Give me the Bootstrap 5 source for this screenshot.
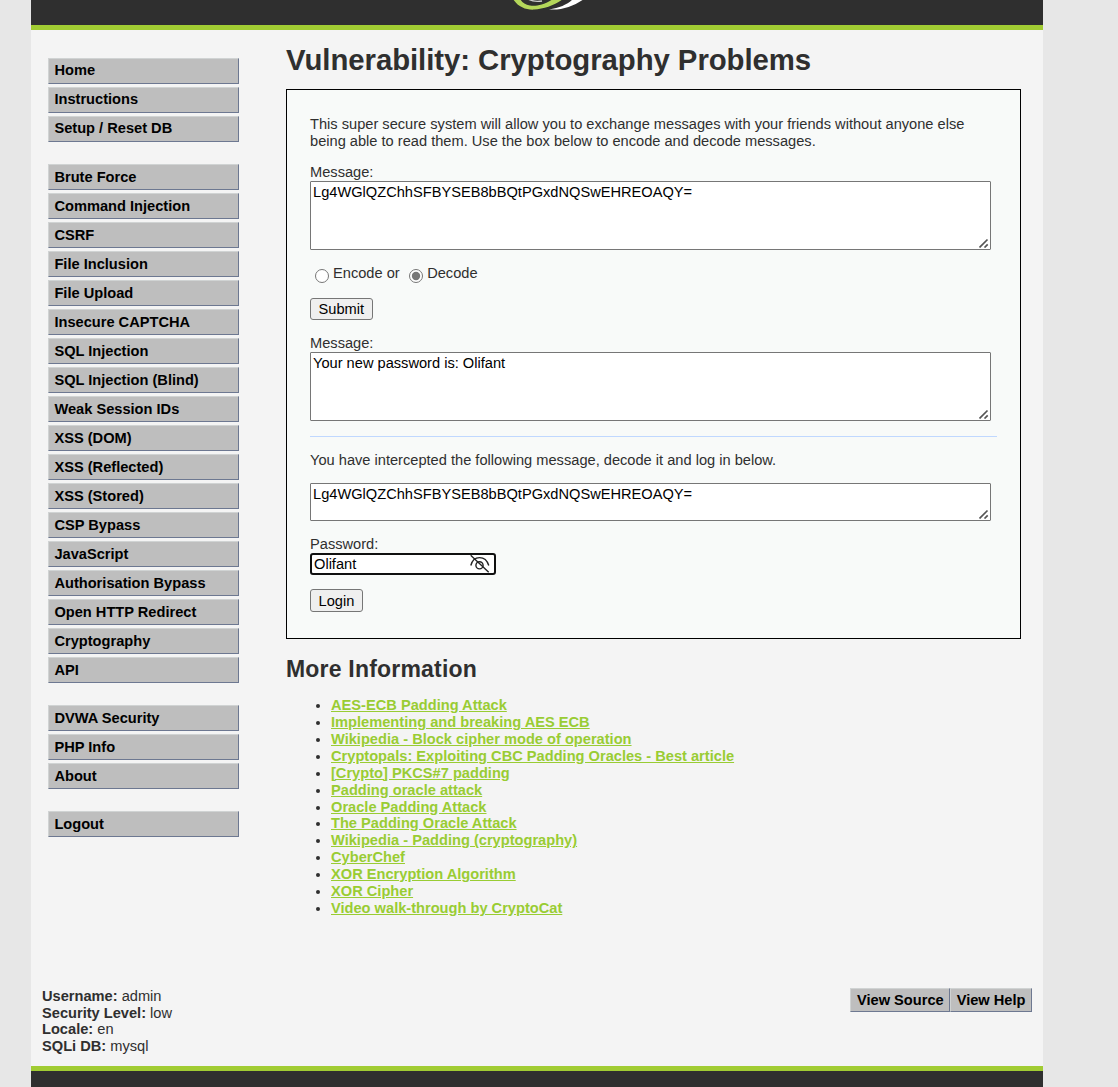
<!DOCTYPE html>
<html lang="en">
<head>
<meta charset="utf-8">
<title>Vulnerability: Cryptography Problems</title>
<link rel="stylesheet" href="https://cdn.jsdelivr.net/npm/bootstrap@5.3.0/dist/css/bootstrap.min.css">
<style>
body{background:#e7e7e7;color:#2f2f2f;font:14.64px/16.9px "Liberation Sans",Arial,sans-serif;height:1087px}
.site-wrap{width:1012px;height:1087px;margin-left:31px;background:#f4f4f4}
.site-head{height:30px;background:#2f2f2f;border-bottom:5px solid #a1cc33}
.site-head svg{overflow:visible}
.site-foot{height:21px;background:#2f2f2f;border-top:5px solid #a1cc33}
.side-menu{width:191px;margin-left:17px;padding-top:28px}
.side-menu ul{margin:0 0 22px}
.menu-link,.tool-btn{display:block;background:#bebebe;color:#000;font-weight:700;text-decoration:none;border:1px solid;border-color:#d0d3d3 #6d7891 #6d7891 #d0d3d3}
.menu-link{height:26px;line-height:16px;padding:3px 5.4px 5px;margin-bottom:3px}
.side-menu ul+ul .menu-link{padding-top:4px;padding-bottom:4px}
.tool-btn{height:24px;line-height:16px;padding:3px 5.5px}
.content-area{width:735px;margin-left:47px;padding-top:13px}
h1{font-size:29.33px;line-height:34px;font-weight:700;letter-spacing:-.05px;margin:0 0 12px}
h2{font-size:23px;line-height:27px;font-weight:700;letter-spacing:.2px;margin:17px 0 14px}
.vuln-box{height:550px;border:1px solid #000;background:#f8faf9;padding:26px 23px 0}
.vuln-box p{line-height:17px;margin-bottom:14px}
.area-wrap{width:681px}
.area-wrap textarea{display:block;width:681px;height:69px;resize:none;border:1px solid #767676;background:#fff;color:#000;font:14.64px/17px "Liberation Sans",Arial,sans-serif;padding:2px;border-radius:1px;overflow:hidden}
.area-wrap textarea.short-area{height:38px}
.grip{position:absolute;right:2px;bottom:2px}
.field-label{display:block;height:17px;line-height:17px}
.spaced-label{margin-top:15px}
.choice-row{height:17px;line-height:17px;margin:15px 0 16px}
.choice-row input{width:14px;height:14px;margin:4px 4px 0 5px;accent-color:#767676}
.choice-row .second-opt{margin-left:9.5px}
.plain-btn{height:22px;border:1px solid #767676;border-radius:3px;background:#efefef;color:#000;font:14.64px/18px "Liberation Sans",Arial,sans-serif;padding:1px 7.5px}
.login-btn{height:23px;padding-top:2px;margin-top:14px}
.rule-line{height:1px;background:#c0d8ff;margin:15px 0}
.pass-field{width:186px;height:22px;border:2px solid #101010;border-radius:3px;background:#fff;color:#000;padding:0 4px 0 2px;line-height:18px}
.ref-list{margin:0;padding-left:45px;line-height:16.92px}
.ref-list a{color:#9c3;font-weight:700}
.main-zone{height:957px}
.foot-info{height:79px;padding:1px 11px 0;line-height:16.7px}
</style>
<script src="https://cdn.jsdelivr.net/npm/bootstrap@5.3.0/dist/js/bootstrap.bundle.min.js"></script>
</head>
<body class="overflow-hidden">
<div class="site-wrap d-flex flex-column">
<header class="site-head d-flex justify-content-center align-items-start flex-shrink-0">
<svg width="90" height="14" viewBox="0 0 90 14" aria-label="DVWA logo"><path d="M36 -1Q42 2.4 50 1" fill="none" stroke="#ccc" stroke-width="1.4"/><path d="M21-1C26 7 34 10 42 9.6C52 9 63 5 71-1L61-1C52 5 44 6.5 38 5.6C33 5 30 2 28-1Z" fill="#b4d65a"/><path d="M92-1C82 6 70 10.5 57 9.4C68 8 76 4 81-1Z" fill="#fff"/></svg>
</header>
<div class="main-zone d-flex flex-shrink-0">
<nav class="side-menu flex-shrink-0">
<ul class="list-unstyled"><li><a class="menu-link" href="#">Home</a></li><li><a class="menu-link" href="#">Instructions</a></li><li><a class="menu-link" href="#">Setup / Reset DB</a></li></ul>
<ul class="list-unstyled"><li><a class="menu-link" href="#">Brute Force</a></li><li><a class="menu-link" href="#">Command Injection</a></li><li><a class="menu-link" href="#">CSRF</a></li><li><a class="menu-link" href="#">File Inclusion</a></li><li><a class="menu-link" href="#">File Upload</a></li><li><a class="menu-link" href="#">Insecure CAPTCHA</a></li><li><a class="menu-link" href="#">SQL Injection</a></li><li><a class="menu-link" href="#">SQL Injection (Blind)</a></li><li><a class="menu-link" href="#">Weak Session IDs</a></li><li><a class="menu-link" href="#">XSS (DOM)</a></li><li><a class="menu-link" href="#">XSS (Reflected)</a></li><li><a class="menu-link" href="#">XSS (Stored)</a></li><li><a class="menu-link" href="#">CSP Bypass</a></li><li><a class="menu-link" href="#">JavaScript</a></li><li><a class="menu-link" href="#">Authorisation Bypass</a></li><li><a class="menu-link" href="#">Open HTTP Redirect</a></li><li><a class="menu-link" href="#">Cryptography</a></li><li><a class="menu-link" href="#">API</a></li></ul>
<ul class="list-unstyled"><li><a class="menu-link" href="#">DVWA Security</a></li><li><a class="menu-link" href="#">PHP Info</a></li><li><a class="menu-link" href="#">About</a></li></ul>
<ul class="list-unstyled"><li><a class="menu-link" href="#">Logout</a></li></ul>
</nav>
<main class="content-area flex-shrink-0">
<h1>Vulnerability: Cryptography Problems</h1>
<section class="vuln-box">
<p>This super secure system will allow you to exchange messages with your friends without anyone else<br>being able to read them. Use the box below to encode and decode messages.</p>
<label class="field-label" for="msg">Message:</label>
<div class="area-wrap position-relative"><textarea id="msg" spellcheck="false">Lg4WGlQZChhSFBYSEB8bBQtPGxdNQSwEHREOAQY=</textarea><svg class="grip" width="10" height="10" viewBox="0 0 10 10" stroke="#555" stroke-width="1.7"><path d="M.5 9.5L8.5 1.5M5.5 9.5L8.7 6.3"/></svg></div>
<div class="choice-row d-flex"><input type="radio" name="direction" id="enc"><label for="enc">Encode or</label><input type="radio" name="direction" id="dec" class="second-opt" checked><label for="dec">Decode</label></div>
<button class="plain-btn d-block" type="button">Submit</button>
<label class="field-label spaced-label" for="out">Message:</label>
<div class="area-wrap position-relative"><textarea id="out" spellcheck="false">Your new password is: Olifant</textarea><svg class="grip" width="10" height="10" viewBox="0 0 10 10" stroke="#555" stroke-width="1.7"><path d="M.5 9.5L8.5 1.5M5.5 9.5L8.7 6.3"/></svg></div>
<div class="rule-line"></div>
<p>You have intercepted the following message, decode it and log in below.</p>
<div class="area-wrap position-relative"><textarea class="short-area" spellcheck="false" aria-label="Intercepted message">Lg4WGlQZChhSFBYSEB8bBQtPGxdNQSwEHREOAQY=</textarea><svg class="grip" width="10" height="10" viewBox="0 0 10 10" stroke="#555" stroke-width="1.7"><path d="M.5 9.5L8.5 1.5M5.5 9.5L8.7 6.3"/></svg></div>
<span class="field-label spaced-label">Password:</span>
<div class="pass-field d-flex justify-content-between align-items-center"><span>Olifant</span>
<svg width="20" height="18" viewBox="0 0 20 18" fill="none" stroke="#222" stroke-width="1.4"><path d="M.8 10.5C3.5 0 15.5 0 18.8 10.5M.7 .3L18.7 17.3"/><circle cx="9.5" cy="10.3" r="3.6"/></svg></div>
<button class="plain-btn login-btn d-block" type="button">Login</button>
</section>
<h2>More Information</h2>
<ul class="ref-list">
<li><a href="#">AES-ECB Padding Attack</a></li><li><a href="#">Implementing and breaking AES ECB</a></li><li><a href="#">Wikipedia - Block cipher mode of operation</a></li><li><a href="#">Cryptopals: Exploiting CBC Padding Oracles - Best article</a></li><li><a href="#">[Crypto] PKCS#7 padding</a></li><li><a href="#">Padding oracle attack</a></li><li><a href="#">Oracle Padding Attack</a></li><li><a href="#">The Padding Oracle Attack</a></li><li><a href="#">Wikipedia - Padding (cryptography)</a></li><li><a href="#">CyberChef</a></li><li><a href="#">XOR Encryption Algorithm</a></li><li><a href="#">XOR Cipher</a></li><li><a href="#">Video walk-through by CryptoCat</a></li>
</ul>
</main>
</div>
<div class="foot-info d-flex justify-content-between align-items-start flex-shrink-0">
<div><b>Username:</b> admin<br><b>Security Level:</b> low<br><b>Locale:</b> en<br><b>SQLi DB:</b> mysql</div>
<div class="d-flex"><a class="tool-btn" href="#">View Source</a><a class="tool-btn" href="#">View Help</a></div>
</div>
<footer class="site-foot flex-shrink-0"></footer>
</div>
</body>
</html>
